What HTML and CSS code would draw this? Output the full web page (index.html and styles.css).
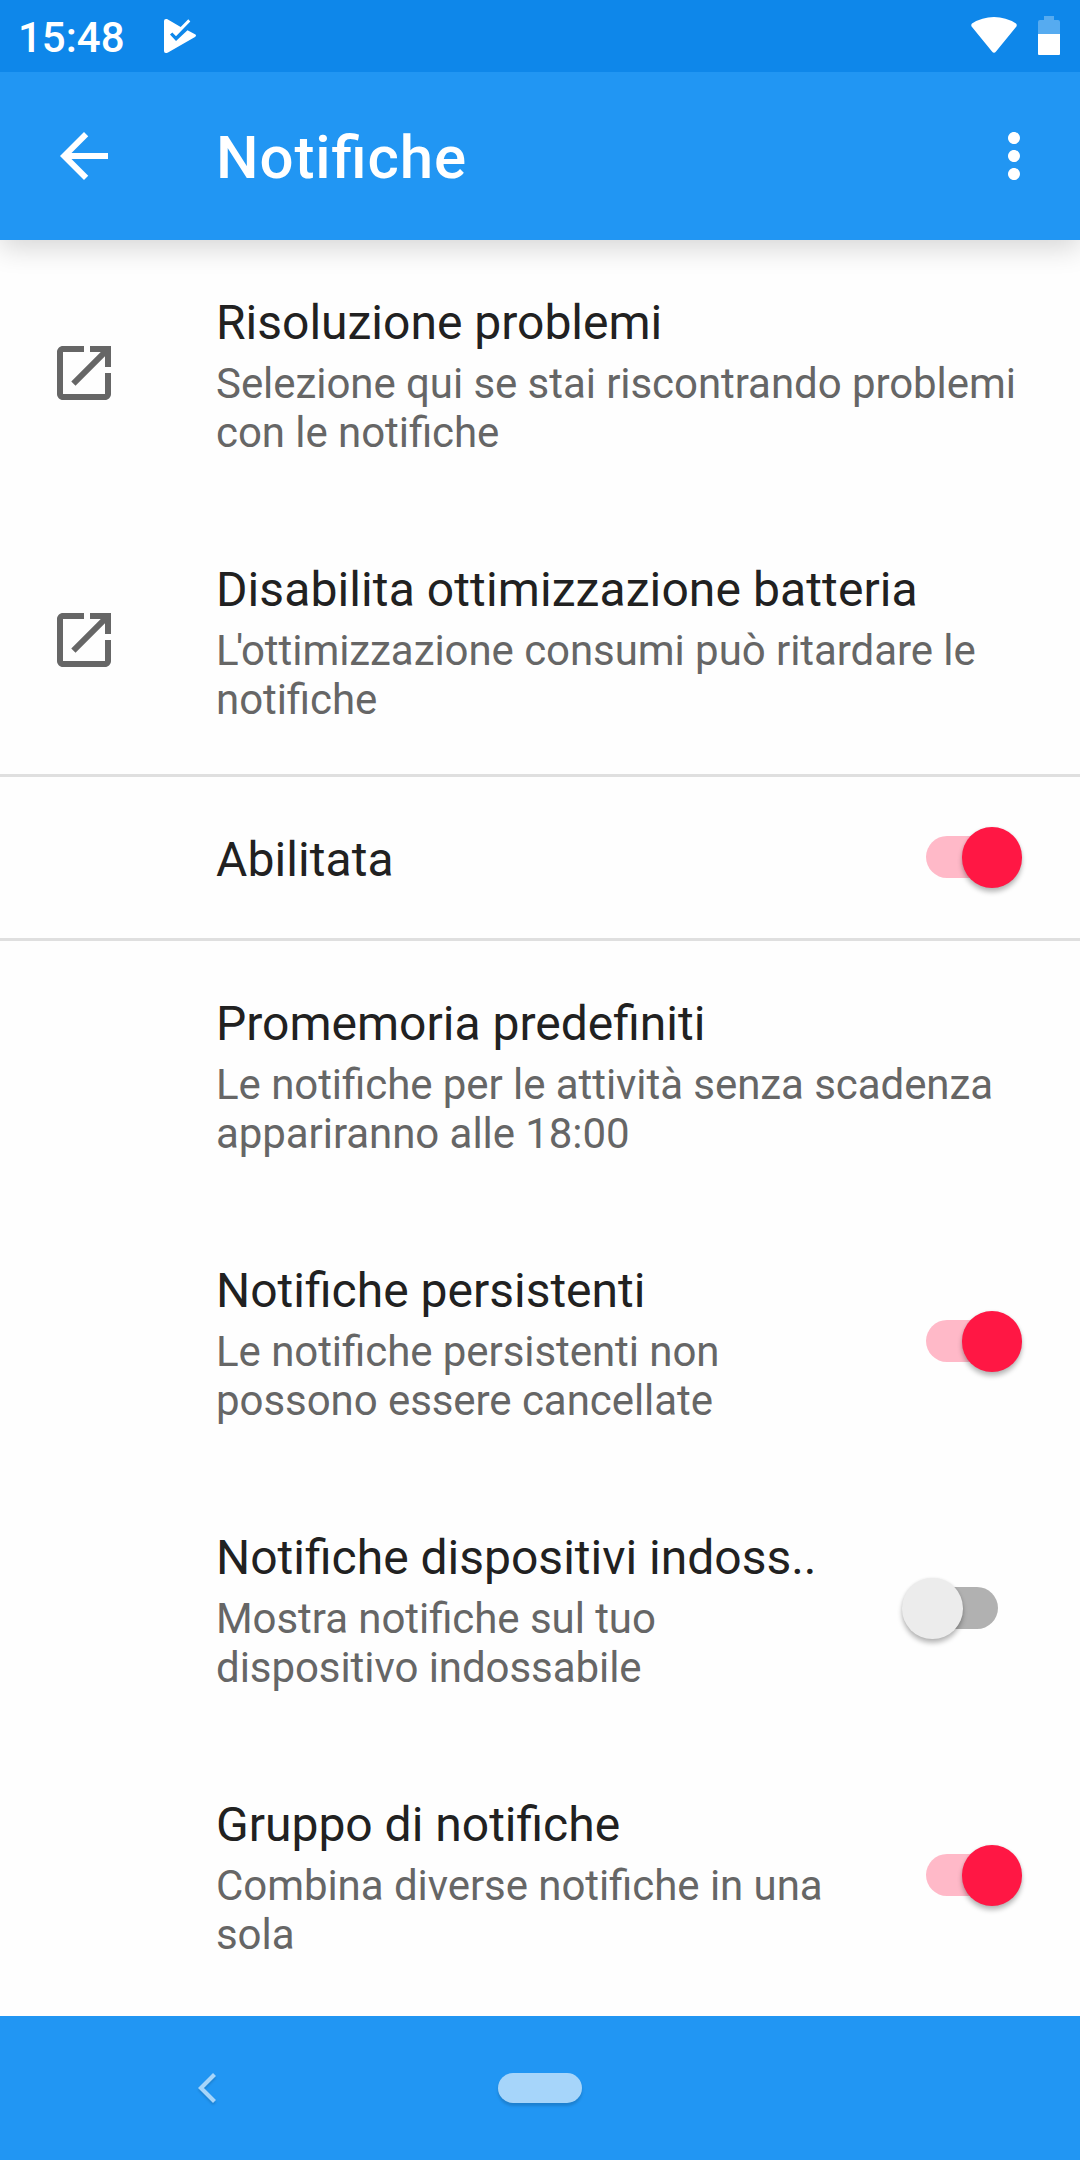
FILE: index.html
```html
<!DOCTYPE html>
<html lang="it">
<head>
    <meta charset="UTF-8">
    <meta name="viewport" content="width=device-width, initial-scale=1.0">
    <title>Notifiche</title>
    <link rel="stylesheet" href="styles.css">
</head>
<body>
    <div class="status-bar">
        <span class="clock">15:48</span>
        <svg class="task-icon" width="32" height="34" viewBox="0 0 32 34">
            <path fill="#fff" d="M0 2Q0 0 2 0H3L16.700 8L24.300 .3L26.300 2.500L12 17.300L8.300 13.500L6 15.500L12 22L23.500 11.200L31 15.300Q33 16.500 31 18L4 33.500Q0 35 0 32Z"/>
        </svg>
        <div class="status-icons">
            <svg width="46" height="36" viewBox="0 0 46 36">
                <path fill="#fff" d="M1 6.500Q11 0 23 0T45 6.500Q46.500 8 45 10L25 34.500Q23 37 21 34.500L1 10Q-.5 8 1 6.500Z"/>
            </svg>
            <svg width="22" height="39" viewBox="0 0 22 39">
                <path fill="#fff" fill-opacity=".3" d="M6 0H16V4H20Q22 4 22 6V18H0V6Q0 4 2 4H6Z"/>
                <path fill="#fff" d="M0 18H22V38Q22 39 21 39H1Q0 39 0 38Z"/>
            </svg>
        </div>
    </div>

    <header class="toolbar">
        <svg class="icon" viewBox="0 0 24 24"><path d="M20 11H7.830l5.590-5.590L12 4l-8 8 8 8 1.410-1.410L7.830 13H20v-2z"/></svg>
        <h1>Notifiche</h1>
        <svg class="icon" viewBox="0 0 24 24"><path d="M12 8c1.100 0 2-.9 2-2s-.9-2-2-2-2 .9-2 2 .9 2 2 2zm0 2c-1.100 0-2 .9-2 2s.9 2 2 2 2-.9 2-2-.9-2-2-2zm0 6c-1.100 0-2 .9-2 2s.9 2 2 2 2-.9 2-2-.9-2-2-2z"/></svg>
    </header>

    <main class="settings">
        <div class="row">
            <div class="row-icon">
                <svg class="icon" viewBox="0 0 24 24"><path d="M19 19H5V5h7V3H5c-1.110 0-2 .9-2 2v14c0 1.100.89 2 2 2h14c1.100 0 2-.9 2-2v-7h-2v7zM14 3v2h3.590l-9.830 9.830 1.410 1.410L19 6.410V10h2V3h-7z"/></svg>
            </div>
            <div class="row-text">
                <h2>Risoluzione problemi</h2>
                <p>Selezione qui se stai riscontrando problemi con le notifiche</p>
            </div>
        </div>
        <div class="row">
            <div class="row-icon">
                <svg class="icon" viewBox="0 0 24 24"><path d="M19 19H5V5h7V3H5c-1.110 0-2 .9-2 2v14c0 1.100.89 2 2 2h14c1.100 0 2-.9 2-2v-7h-2v7zM14 3v2h3.590l-9.830 9.830 1.410 1.410L19 6.410V10h2V3h-7z"/></svg>
            </div>
            <div class="row-text">
                <h2 class="wide">Disabilita ottimizzazione batteria</h2>
                <p><span class="tight">L'</span>ottimizzazione consumi può ritardare le notifiche</p>
            </div>
        </div>
        <div class="row single">
            <div class="row-icon"></div>
            <div class="row-text"><h2 class="wide">Abilitata</h2></div>
            <div class="switch on"><span class="thumb"></span></div>
        </div>
        <div class="row">
            <div class="row-icon"></div>
            <div class="row-text">
                <h2>Promemoria predefiniti</h2>
                <p>Le notifiche per le attività senza scadenza appariranno alle 18:00</p>
            </div>
        </div>
        <div class="row">
            <div class="row-icon"></div>
            <div class="row-text">
                <h2>Notifiche persistenti</h2>
                <p>Le notifiche persistenti non possono essere cancellate</p>
            </div>
            <div class="switch on"><span class="thumb"></span></div>
        </div>
        <div class="row">
            <div class="row-icon"></div>
            <div class="row-text">
                <h2>Notifiche dispositivi indoss..</h2>
                <p>Mostra notifiche sul tuo dispositivo indossabile</p>
            </div>
            <div class="switch"><span class="thumb"></span></div>
        </div>
        <div class="row">
            <div class="row-icon"></div>
            <div class="row-text">
                <h2>Gruppo di notifiche</h2>
                <p>Combina diverse notifiche in una sola</p>
            </div>
            <div class="switch on"><span class="thumb"></span></div>
        </div>
    </main>

    <nav class="nav-bar">
        <svg class="nav-back" width="18" height="30" viewBox="0 0 18 30"><path d="M16.500 1.500L3 15L16.500 28.500"/></svg>
        <span class="nav-home"></span>
    </nav>
</body>
</html>
```
FILE: styles.css
```css
* {
    box-sizing: border-box;
}
body {
    display: flex;
    flex-direction: column;
    height: 2160px;
    margin: 0;
    background: #fefefe;
    font-family: Roboto, sans-serif;
    font-feature-settings: "liga" 1; /* keeps the fi ligature with letter-spacing */
    overflow: hidden;
}
svg {
    display: block;
    flex: none;
}
.icon {
    width: 72px;
    height: 72px;
    fill: currentColor;
}

/* Status bar */
.status-bar {
    position: relative;
    z-index: 1;
    display: flex;
    align-items: flex-start;
    flex: none;
    height: 72px;
    padding: 16px 20px 0 18px;
    background: #0e87ea;
    color: #fff;
}
.clock {
    width: 146px;
    margin-top: -3px;
    font-size: 42px;
    font-weight: 500;
    line-height: 49px;
}
.task-icon {
    margin-top: 3px;
}
.status-icons {
    display: flex;
    gap: 21px;
    margin-left: auto;
}
.status-icons svg:first-child {
    margin-top: 1px;
}

/* Toolbar */
.toolbar {
    display: flex;
    align-items: center;
    flex: none;
    height: 168px;
    padding: 0 30px 0 48px;
    background: #2196f3;
    color: #fff;
    box-shadow: 0 8px 26px rgba(0, 0, 0, 0.16);
}
.toolbar h1 {
    flex: 1;
    margin: 4px 0 0 96px;
    font-size: 60px;
    font-weight: 500;
    line-height: 70px;
    letter-spacing: 0.9px;
}

/* Preference list */
.settings {
    flex: 1;
}
.row {
    display: flex;
    align-items: center;
    height: 267px;
    padding-right: 48px;
}
.row-icon {
    flex: none;
    width: 216px;
    margin-top: -1px;
    padding-left: 48px;
    color: #666;
}
.row-text {
    flex: 1;
    align-self: flex-start;
    padding-top: 54px;
}
.row h2 {
    margin: 0 0 8px;
    color: #212121;
    font-size: 48px;
    font-weight: 400;
    line-height: 57px;
    white-space: nowrap;
}
.row h2.wide {
    letter-spacing: 0.1px;
}
.row p {
    margin: 0;
    color: #666;
    font-size: 42px;
    line-height: 49px;
    letter-spacing: -0.06px;
}
.tight {
    letter-spacing: -2.5px;
}
.row.single {
    height: 167px;
    border-top: 3px solid #dfdfdf;
    border-bottom: 3px solid #dfdfdf;
}

/* Switch */
.switch {
    position: relative;
    flex: none;
    width: 72px;
    height: 42px;
    margin: -1px 34px 0 90px;
    border-radius: 21px;
    background: #b1b1b1;
}
.thumb {
    position: absolute;
    top: -9px;
    left: -24px;
    width: 60.5px;
    height: 60.5px;
    border-radius: 50%;
    background: #ececec;
    box-shadow: 0 4px 5px rgba(0, 0, 0, 0.27), 0 0 3px rgba(0, 0, 0, 0.08);
}
.switch.on {
    background: #ffb9c8;
}
.switch.on .thumb {
    left: 35.5px;
    background: #ff1744;
}

/* Navigation bar */
.nav-bar {
    display: flex;
    align-items: center;
    flex: none;
    height: 144px;
    padding-left: 198px;
    background: #2196f3;
}
.nav-back {
    fill: none;
    stroke: #a6d5fa;
    stroke-width: 4.2;
    overflow: visible;
    filter: drop-shadow(0 2px 1px rgba(0, 0, 0, 0.15));
}
.nav-home {
    width: 84px;
    height: 30px;
    margin-left: 282px;
    border-radius: 15px;
    background: #a6d5fa;
    box-shadow: 0 3px 3px rgba(0, 0, 0, 0.15);
}
```
